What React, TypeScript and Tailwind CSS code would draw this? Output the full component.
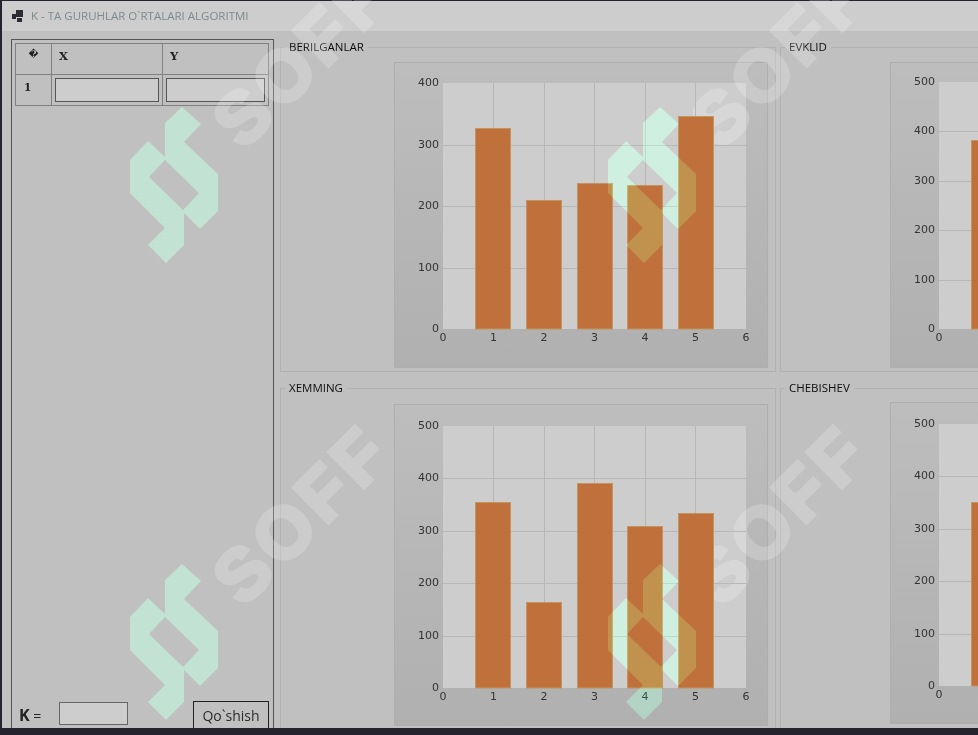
const logoPath =
  "M52 0L71 17L54 35L88 67L88 104L70 122L54 106L54 138L36 156L18 138L35 121L0 86L0 53L18 34L35 50L35 16ZM35 53L19 70L53 103L69 86Z";

type ChartProps = {
  values: number[];
  max: number;
  panelClass: string;
  plotClass: string;
  plotHeight: number;
};

const Chart = ({ values, max, panelClass, plotClass, plotHeight }: ChartProps) => {
  const unit = 303 / 6;
  const ticks = [];
  for (let t = 0; t <= max; t += 100) ticks.push(t);

  return (
    <div className={`w-[374px] border border-[#aeaeae] bg-gradient-to-b from-[#bcbdbc] to-[#b0b0b0] ${panelClass}`}>
      <div className={`ml-[48px] w-[303px] bg-[#cdcdcd] ${plotClass}`}>
        <svg
          width={303}
          height={plotHeight}
          className="relative z-[2] block overflow-visible font-['DejaVu_Sans',sans-serif] text-[11px]"
        >
          {[1, 2, 3, 4, 5].map((n) => (
            <line
              key={n}
              x1={Math.floor(n * unit) + 0.5}
              x2={Math.floor(n * unit) + 0.5}
              y1={0}
              y2={plotHeight}
              stroke="#b7b7b7"
            />
          ))}
          {ticks.map((t) => {
            const y = Math.round(plotHeight * (1 - t / max)) + 0.5;
            return (
              <g key={t}>
                {t > 0 && t < max && <line x1={0} x2={303} y1={y} y2={y} stroke="#b7b7b7" />}
                <text x={-4} y={y + 2} textAnchor="end" fill="#333">
                  {t}
                </text>
              </g>
            );
          })}
          {values.map((v, i) => {
            const h = (plotHeight * v) / max;
            return (
              <rect
                key={i}
                x={Math.round(32.4 + i * 50.6) + 0.5}
                y={Math.round(plotHeight - h) - 0.5}
                width={35}
                height={Math.round(h) + 0.5}
                fill="#bf703b"
                stroke="#c2945f"
              />
            );
          })}
          {[0, 1, 2, 3, 4, 5, 6].map((n) => (
            <text key={n} x={n * unit} y={plotHeight + 12} textAnchor="middle" fill="#333">
              {n}
            </text>
          ))}
        </svg>
      </div>
    </div>
  );
};

const GroupBox = ({ title, className, children }: { title: string; className: string; children: React.ReactNode }) => (
  <div className={`relative w-[496px] border border-[#b2b2b2] ${className}`}>
    <span className="absolute -top-[9px] left-[4px] bg-[#c0c0c0] px-[4px] font-['Open_Sans',sans-serif] text-[11.5px] leading-[15px] text-[#0c0c0c]">
      {title}
    </span>
    {children}
  </div>
);

const Logo = ({ className }: { className: string }) => (
  <svg
    width={88}
    height={156}
    viewBox="0 0 88 156"
    className={`absolute z-[3] mix-blend-plus-lighter ${className}`}
  >
    <path d={logoPath} fill="rgb(2,34,19)" fillRule="evenodd" />
  </svg>
);

const Soft = ({ className }: { className: string }) => (
  <span
    className={`absolute z-[1] w-[300px] -translate-x-1/2 -translate-y-1/2 -rotate-45 text-center font-['Liberation_Sans',sans-serif] text-[72px] leading-none font-bold tracking-[6px] text-white opacity-20 [-webkit-text-stroke:4px_white] ${className}`}
  >
    SOFF
  </span>
);

const App = () => {
  return (
    <div className="relative flex h-[735px] w-[978px] flex-col overflow-hidden bg-[#25232e]">
      <div className="h-px shrink-0" />
      <div className="ml-[2px] flex h-[727px] shrink-0 flex-col overflow-hidden bg-[#c0c0c0]">
        <header className="flex h-[30px] shrink-0 items-center gap-[8px] bg-[#cdcdcd] pl-[10px]">
          <svg width={11} height={12} viewBox="0 0 11 12">
            <path d="M0 4h4v5H0zM4 0h7v7H4zM5 8h5v4H5z" fill="#2b2b33" />
          </svg>
          <span className="font-['Open_Sans',sans-serif] text-[11.5px] text-[#7d8a8c]">
            K - TA GURUHLAR O`RTALARI ALGORITMI
          </span>
        </header>

        <main className="flex min-h-0 flex-1">
          <aside className="mt-[8px] ml-[9px] flex h-[696px] w-[263px] shrink-0 flex-col justify-between border border-[#555] p-[3px]">
            <table className="w-[254px] table-fixed border-collapse font-['DejaVu_Serif',serif] text-[11.5px] text-[#222]">
              <thead>
                <tr className="h-[31px]">
                  <th className="w-[36px] border border-[#808080] pb-[8px] text-center text-[9px] font-bold">�</th>
                  <th className="w-[111px] border border-[#808080] pb-[5px] pl-[7px] text-left font-bold">X</th>
                  <th className="border border-[#808080] pb-[5px] pl-[7px] text-left font-bold">Y</th>
                </tr>
              </thead>
              <tbody>
                <tr className="h-[31px]">
                  <td className="border border-[#808080] pb-[5px] pl-[8px] text-[10.5px] font-bold">1</td>
                  <td className="border border-[#808080] px-[3px]">
                    <div className="h-[24px] border border-[#555] bg-[#cdcdcd]" />
                  </td>
                  <td className="border border-[#808080] px-[3px]">
                    <div className="h-[24px] border border-[#555] bg-[#cdcdcd]" />
                  </td>
                </tr>
              </tbody>
            </table>

            <div className="flex items-start pl-[4px] font-['Open_Sans',sans-serif]">
              <span className="mt-[4px] w-[40px] text-[14px] leading-[20px] text-[#222]">
                <b className="text-[16px]">K</b> =
              </span>
              <div className="mt-[1px] h-[23px] w-[69px] border border-[#666] bg-[#cdcdcd]" />
              <button className="ml-[65px] h-[30px] w-[76px] border border-[#222] text-[14px] leading-[28px] text-[#2c2c2c]">
                Qo`shish
              </button>
            </div>
          </aside>

          <div className="mt-[16px] ml-[6px] grid shrink-0 grid-cols-[496px_496px] content-start gap-x-[4px] gap-y-[16px]">
            <GroupBox title="BERILGANLAR" className="h-[325px]">
              <Chart
                values={[325, 208, 235, 233, 345]}
                max={400}
                plotHeight={246}
                panelClass="mt-[14px] ml-[113px] h-[306px]"
                plotClass="mt-[20px]"
              />
            </GroupBox>
            <GroupBox title="EVKLID" className="h-[325px]">
              <Chart
                values={[381, 300, 260, 240, 340]}
                max={500}
                plotHeight={247}
                panelClass="mt-[14px] ml-[109px] h-[306px]"
                plotClass="mt-[19px]"
              />
            </GroupBox>
            <GroupBox title="XEMMING" className="h-[342px]">
              <Chart
                values={[354, 162, 390, 308, 332]}
                max={500}
                plotHeight={262}
                panelClass="mt-[15px] ml-[113px] h-[322px]"
                plotClass="mt-[21px]"
              />
            </GroupBox>
            <GroupBox title="CHEBISHEV" className="h-[342px]">
              <Chart
                values={[350, 165, 390, 310, 330]}
                max={500}
                plotHeight={262}
                panelClass="mt-[13px] ml-[109px] h-[322px]"
                plotClass="mt-[21px]"
              />
            </GroupBox>
          </div>
        </main>
      </div>

      <Soft className="top-[57px] left-[302px]" />
      <Soft className="top-[57px] left-[780px]" />
      <Soft className="top-[514px] left-[302px]" />
      <Soft className="top-[514px] left-[780px]" />

      <Logo className="top-[107px] left-[130px]" />
      <Logo className="top-[107px] left-[608px]" />
      <Logo className="top-[564px] left-[130px]" />
      <Logo className="top-[564px] left-[608px]" />
    </div>
  );
};

export default App;
